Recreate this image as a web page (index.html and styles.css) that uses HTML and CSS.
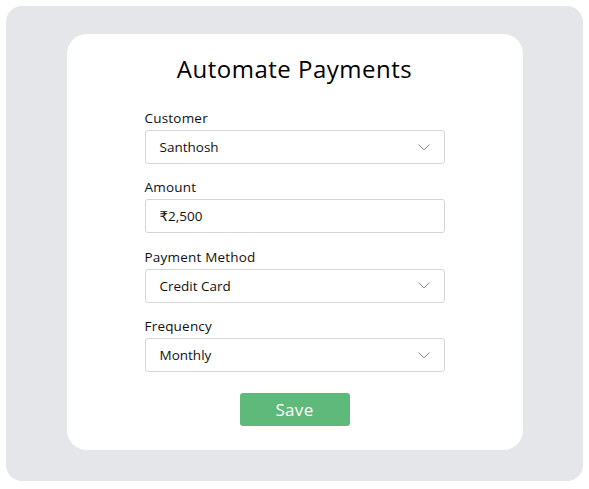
FILE: index.html
```html
<!DOCTYPE html>
<html>
<head>
<meta charset="utf-8">
<link rel="stylesheet" href="styles.css">
</head>
<body>
<div class="outer">
  <div class="card">
    <h1 class="title">Automate Payments</h1>
    <form class="form">
      <div class="field">
        <label class="label">Customer</label>
        <div class="control select">
          <span>Santhosh</span>
          <svg class="chev" width="12" height="7" viewBox="0 0 12 7"><path d="M0.5 0.5 L6 6 L11.5 0.5" fill="none" stroke="#8a8a8a" stroke-width="1"/></svg>
        </div>
      </div>
      <div class="field">
        <label class="label">Amount</label>
        <div class="control input"><span>₹2,500</span></div>
      </div>
      <div class="field">
        <label class="label">Payment Method</label>
        <div class="control select">
          <span>Credit Card</span>
          <svg class="chev" width="12" height="7" viewBox="0 0 12 7"><path d="M0.5 0.5 L6 6 L11.5 0.5" fill="none" stroke="#8a8a8a" stroke-width="1"/></svg>
        </div>
      </div>
      <div class="field">
        <label class="label">Frequency</label>
        <div class="control select">
          <span>Monthly</span>
          <svg class="chev" width="12" height="7" viewBox="0 0 12 7"><path d="M0.5 0.5 L6 6 L11.5 0.5" fill="none" stroke="#8a8a8a" stroke-width="1"/></svg>
        </div>
      </div>
      <div class="actions">
        <button type="button" class="save">Save</button>
      </div>
    </form>
  </div>
</div>
</body>
</html>
```

FILE: styles.css
```css
* { box-sizing: border-box; }
body {
  margin: 0;
  padding: 6px;
  font-family: "Open Sans", "DejaVu Sans", sans-serif;
  color: #111;
}
.outer {
  width: 577px;
  height: 475px;
  background: #e5e6ea;
  border-radius: 16px;
  padding-top: 28px;
  display: flex;
  justify-content: center;
  align-items: flex-start;
}
.card {
  width: 456px;
  height: 416px;
  background: #fff;
  border-radius: 20px;
  padding: 19px 78px 0 78px;
}
.title {
  margin: 0 0 23px 0;
  font-size: 24px;
  font-weight: 400;
  letter-spacing: 0.5px;
  line-height: 32px;
  text-align: center;
  color: #000;
}
.form { display: flex; flex-direction: column; }
.field { display: flex; flex-direction: column; margin-bottom: 13.4px; }
.label {
  font-size: 13.5px;
  line-height: 20px;
  margin-bottom: 2px;
  color: #111;
  letter-spacing: 0.2px;
}
.control {
  height: 34px;
  border: 1px solid #d6d6d6;
  border-radius: 3px;
  display: flex;
  align-items: center;
  justify-content: space-between;
  font-size: 13.5px;
  color: #111;
}
.select { padding: 0 14px 0 14px; }
.input { padding: 0 14px; }
.chev { display: block; }
.actions { display: flex; justify-content: center; margin-top: 7px; }
.save {
  width: 110px;
  height: 33px;
  border: none;
  border-radius: 3px;
  background: #5fb97b;
  color: #fff;
  font-family: inherit;
  font-size: 17px;
  letter-spacing: 0.3px;
}
```
